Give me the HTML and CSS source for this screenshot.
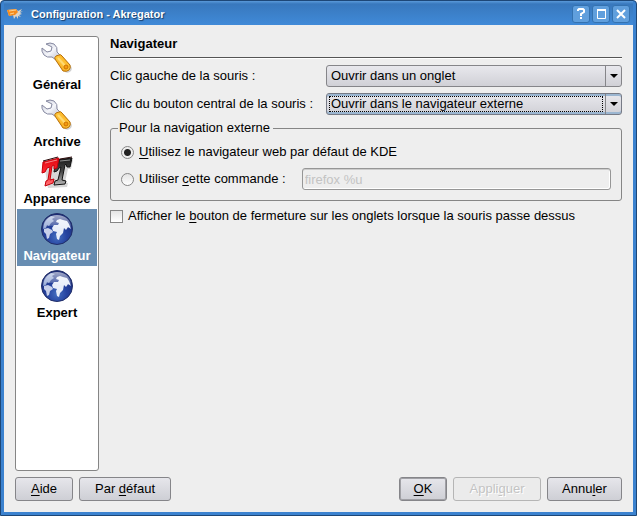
FILE: index.html
```html
<!DOCTYPE html>
<html lang="fr">
<head>
<meta charset="utf-8">
<title>Configuration - Akregator</title>
<link rel="stylesheet" href="styles.css">
</head>
<body>
<svg class="defs" aria-hidden="true">
  <defs>
    <linearGradient id="steel" x1="0" y1="0" x2="1" y2="1"><stop offset="0" stop-color="#c9ccd8"/><stop offset=".5" stop-color="#f4f5fa"/><stop offset="1" stop-color="#b5b8c8"/></linearGradient>
    <linearGradient id="handle" x1="0" y1="1" x2="1" y2="0"><stop offset="0" stop-color="#ee8a00"/><stop offset=".5" stop-color="#ffc83c"/><stop offset="1" stop-color="#f79a08"/></linearGradient>
    <linearGradient id="red" x1="0" y1="0" x2="0" y2="1"><stop offset="0" stop-color="#e00810"/><stop offset=".5" stop-color="#ff2830"/><stop offset="1" stop-color="#ff7478"/></linearGradient>
    <linearGradient id="black" x1="0" y1="0" x2="0" y2="1"><stop offset="0" stop-color="#181818"/><stop offset=".5" stop-color="#484848"/><stop offset="1" stop-color="#bbb"/></linearGradient>
    <radialGradient id="sea" cx=".5" cy=".75" r=".7"><stop offset="0" stop-color="#456fc0"/><stop offset=".45" stop-color="#2643a0"/><stop offset="1" stop-color="#1b2c78"/></radialGradient>
    <linearGradient id="gloss" x1="0" y1="0" x2="0" y2="1"><stop offset="0" stop-color="#fff" stop-opacity=".6"/><stop offset="1" stop-color="#fff" stop-opacity=".12"/></linearGradient>
    <symbol id="wrench" viewBox="0 0 32 32">
      <path d="M15 19l5-6 8 9q3 3 1 6-3 3-6 1z" fill="#777" opacity=".35" transform="translate(1 1)"/>
      <path d="M5 2Q9 0 13 2q4 3 3 8l4 4-5 4-4-3q-5 1-8-2-3-4-2-7l5 4 4-1 1-4z" fill="url(#steel)" stroke="#8588a0"/>
      <path d="M14 17q-1-1 1-3l3-1q2-1 3 1l8 9q1 3-1 5t-6 1z" fill="url(#handle)" stroke="#b87008"/>
      <path d="M17 16l9 10" stroke="#ffe28a" stroke-width="2" opacity=".7"/>
      <circle cx="25" cy="25" r="2" fill="#f59a10" stroke="#cc7300"/>
    </symbol>
    <symbol id="fonts" viewBox="0 0 32 32">
      <path d="M2 7l29-4-2 9h-3l-3 13 3 1-1 4-19 1z" fill="#777" opacity=".3" transform="translate(1 1)"/>
      <path d="M15 4l16-2-2 9h-3l-1-3-1 1-3 15 4 1-1 3-11 1 1-4 3-1 3-13-2 1-2 3-3 1z" fill="url(#black)" stroke="#111"/>
      <path d="M2 6l16-4-2 10-3 1v-4l-2 1-2 14 4-1-1 4-8 3 1-5 2-1 2-13-3 1-2 4-3 1z" fill="url(#red)" stroke="#c4000a"/>
      <path d="M2 5l15-4M19 3l12-2" stroke="#2a0808"/>
      <path d="M4 7l12-3M19 5l10-1" stroke="#fff" opacity=".5"/>
    </symbol>
    <symbol id="globe" viewBox="0 0 32 32">
      <circle cx="16" cy="16" r="15.500" fill="url(#sea)" stroke="#222f68"/>
      <path d="M3 11q2-5 7-8l4 1-3 2 2 2-3 2-2 3-2-1-1 3-3 1z" fill="#8fa3d4"/>
      <path d="M3 16l4-1 4 2 1 2-3 2-1 4-2 1-1-5-2-2z" fill="#c8d0ea"/>
      <path d="M16 7l3-1 3 1 4 1 2 3 2 5-3-2-2 3-2-2-1 5-3 3-1 4-2-1-1-5 1-2-4-1-1-3 2-3h4l1-2-3-1z" fill="#e8edf9"/>
      <path d="M2 15C2 7 8 2 16 2s14 5 14 12q-6 3-13 0-8-3-15 1z" fill="url(#gloss)"/>
    </symbol>
  </defs>
</svg>
<div class="window">
  <header class="titlebar">
    <svg class="app-icon" viewBox="0 0 16 16" aria-hidden="true">
      <path d="M0 4l9-1 2 2 4-2-2 3 3-1-3 2 2 1-3 1 2 2-3-1v3l-2-3-2 3-1-4-4 1-1-3z" fill="#ddd3c5"/>
      <path d="M0 4l9-1 2 3-3 3-6 1-1-3z" fill="#f58b1c"/>
      <path d="M2 5l7-1M3 8l4-1" stroke="#ffd08a"/>
    </svg>
    <h1 class="title">Configuration - Akregator</h1>
    <div class="window-controls">
      <button class="control" type="button" aria-label="Aide contextuelle"><svg viewBox="0 0 16 16"><path d="M5 5V4l1-1h4l1 1v2L8 8v2M8 11v2" fill="none" stroke="#fff" stroke-width="2"/></svg></button>
      <button class="control" type="button" aria-label="Maximiser"><svg viewBox="0 0 16 16"><path d="M4.500 4.500h8v8h-8z" fill="none" stroke="#fff"/><path d="M4 4h9" stroke="#fff" stroke-width="2"/></svg></button>
      <button class="control" type="button" aria-label="Fermer"><svg viewBox="0 0 16 16"><path d="M4 4l8 8M12 4l-8 8" stroke="#fff" stroke-width="2"/></svg></button>
    </div>
  </header>
  <main class="content">
    <div class="columns">
      <nav class="sidebar">
        <a class="page" href="#general"><svg class="page-icon"><use href="#wrench"/></svg>Général</a>
        <a class="page" href="#archive"><svg class="page-icon"><use href="#wrench"/></svg>Archive</a>
        <a class="page" href="#apparence"><svg class="page-icon"><use href="#fonts"/></svg>Apparence</a>
        <a class="page selected" href="#navigateur" aria-current="page"><svg class="page-icon"><use href="#globe"/></svg>Navigateur</a>
        <a class="page" href="#expert"><svg class="page-icon"><use href="#globe"/></svg>Expert</a>
      </nav>
      <form class="settings" id="settings">
        <h2 class="heading">Navigateur</h2>
        <div class="choices">
          <label for="left-click">Clic gauche de la souris :</label>
          <div class="combo">
            <select id="left-click"><option>Ouvrir dans un onglet</option></select>
            <span class="arrow"></span>
          </div>
          <label for="middle-click">Clic du bouton central de la souris :</label>
          <div class="combo focused">
            <select id="middle-click"><option>Ouvrir dans le navigateur externe</option></select>
            <span class="arrow"></span>
          </div>
        </div>
        <fieldset class="group">
          <legend>Pour la navigation externe</legend>
          <div class="option">
            <input type="radio" name="browser" id="default-browser" checked>
            <label for="default-browser"><u>U</u>tilisez le navigateur web par défaut de KDE</label>
          </div>
          <div class="option">
            <input type="radio" name="browser" id="custom-browser">
            <label for="custom-browser">Utiliser <u>c</u>ette commande :</label>
            <input class="command" type="text" value="firefox %u" aria-label="Commande" disabled>
          </div>
        </fieldset>
        <div class="option">
          <input type="checkbox" id="close-button">
          <label for="close-button">Afficher le <u>b</u>outon de fermeture sur les onglets lorsque la souris passe dessus</label>
        </div>
      </form>
    </div>
    <footer class="actions">
      <button class="button" type="button"><u>A</u>ide</button>
      <button class="button wide" type="button">Par <u>d</u>éfaut</button>
      <span class="spacer"></span>
      <button class="button default" type="submit" form="settings"><u>O</u>K</button>
      <button class="button wide" type="button" disabled>Appli<u>q</u>uer</button>
      <button class="button medium" type="button">Annu<u>l</u>er</button>
    </footer>
  </main>
</div>
</body>
</html>
```
FILE: styles.css
```css
* { box-sizing: border-box; }

body {
  margin: 0;
  background: #fff;
  color: #000;
  font: 13px/16px "Liberation Sans", Arial, sans-serif;
}

button, input, select { font: inherit; color: inherit; margin: 0; }
u { text-underline-offset: 2px; }
.defs { position: absolute; width: 0; height: 0; }

.window {
  display: flex;
  flex-direction: column;
  min-height: 100vh;
  padding: 0 3px 3px;
  background: #3b82cf;
  border: 1px solid #1d4777;
  border-radius: 4px 4px 0 0;
}

.titlebar {
  display: flex;
  align-items: center;
  gap: 8px;
  height: 24px;
  padding: 2px 0 0 3px;
  background: linear-gradient(#5a9ada 0, #3878bd 3px, #408ad8 100%);
}
.app-icon { width: 16px; height: 16px; }
.title {
  flex: 1;
  margin: 0;
  color: #fff;
  font-size: 11px;
  line-height: 16px;
  text-shadow: 1px 1px 1px #183e6b;
}
.window-controls { display: flex; gap: 2px; padding-right: 3px; }
.control {
  width: 18px;
  height: 18px;
  padding: 0;
  border: 1px solid #3472b0;
  border-radius: 3px;
  background: #609fdd;
}
.control svg { display: block; width: 16px; height: 16px; }

.content {
  flex: 1;
  display: flex;
  flex-direction: column;
  gap: 6px;
  padding: 11px;
  background: #eee;
}
.columns { flex: 1; display: flex; gap: 11px; }

.sidebar {
  flex: none;
  width: 84px;
  padding: 1px;
  background: #fff;
  border: 1px solid #858585;
  border-radius: 3px;
}
.page {
  display: flex;
  flex-direction: column;
  align-items: center;
  height: 57px;
  padding-top: 4px;
  color: #000;
  font-weight: bold;
  text-decoration: none;
}
.page-icon { width: 32px; height: 32px; margin-bottom: 3px; }
.selected { background: #678db2; color: #fff; }

.settings { flex: 1; min-width: 0; }
.heading {
  margin: 0 0 7px;
  height: 22px;
  border-bottom: 1px solid #555;
  box-shadow: 0 1px #fff;
  font-size: 13px;
  line-height: 16px;
}
.choices {
  display: grid;
  grid-template-columns: minmax(209px, auto) 1fr;
  align-items: center;
  gap: 6px 7px;
}
.combo { position: relative; }
.combo select {
  display: block;
  appearance: none;
  width: 100%;
  height: 22px;
  padding: 0 22px 0 4px;
  border: 1px solid #858589;
  border-radius: 3px;
  background: linear-gradient(#e8e8ed, #d0d0d6);
}
.focused select {
  border-color: #777b86;
  box-shadow: inset 0 2px #9bb6d1, inset 0 -2px #9bb6d1;
}
.focused::before {
  content: "";
  position: absolute;
  inset: 3px 19px 3px 3px;
  border: 1px dotted #000;
  pointer-events: none;
}
.arrow {
  position: absolute;
  inset: 1px 1px 1px auto;
  width: 16px;
  border-left: 1px solid #858589;
  pointer-events: none;
}
.arrow::after {
  content: "";
  position: absolute;
  top: 8px;
  left: 4px;
  border: 4px solid transparent;
  border-top-color: #000;
  border-bottom: 0;
}

.group {
  min-width: 0;
  margin: 5px 0 7px;
  padding: 5px 10px 10px;
  border: 1px solid #858585;
  border-radius: 3px;
}
.group legend { padding: 0 3px 0 1px; margin-left: -3px; }
.option { display: flex; align-items: center; gap: 5px; min-height: 16px; }
.group .option { min-height: 22px; }
.group .option + .option { margin-top: 5px; }
.option input[type="radio"], .option input[type="checkbox"] {
  flex: none;
  appearance: none;
  width: 13px;
  height: 13px;
  border: 1px solid #858585;
  background: linear-gradient(#e4e4e4, #fff);
}
.option input[type="radio"] { border-radius: 50%; }
.option input[type="radio"]:checked { background: radial-gradient(circle, #222 3px, #eee 4px); }
.command {
  flex: 1;
  min-width: 0;
  height: 22px;
  margin-left: 11px;
  padding: 0 2px;
  border: 1px solid #969696;
  border-radius: 3px;
  background: #eee;
  color: #c3c3c3;
  box-shadow: inset 0 1px #ccc, inset -1px -1px #fff;
}

.actions { display: flex; gap: 6px; }
.spacer { flex: 1; }
.button {
  min-width: 58px;
  height: 24px;
  padding: 0;
  border: 1px solid #858589;
  border-radius: 3px;
  background: linear-gradient(#e6e6eb, #cecfd5);
}
.wide { min-width: 92px; }
.medium { min-width: 75px; }
.default { min-width: 48px; box-shadow: inset 0 0 0 1px #a0a0a5; }
.button:disabled {
  min-width: 88px;
  border-color: #b5b5b5;
  background: #ebebeb;
  color: #c3c3c3;
  text-shadow: 1px 1px #fff;
}
```
